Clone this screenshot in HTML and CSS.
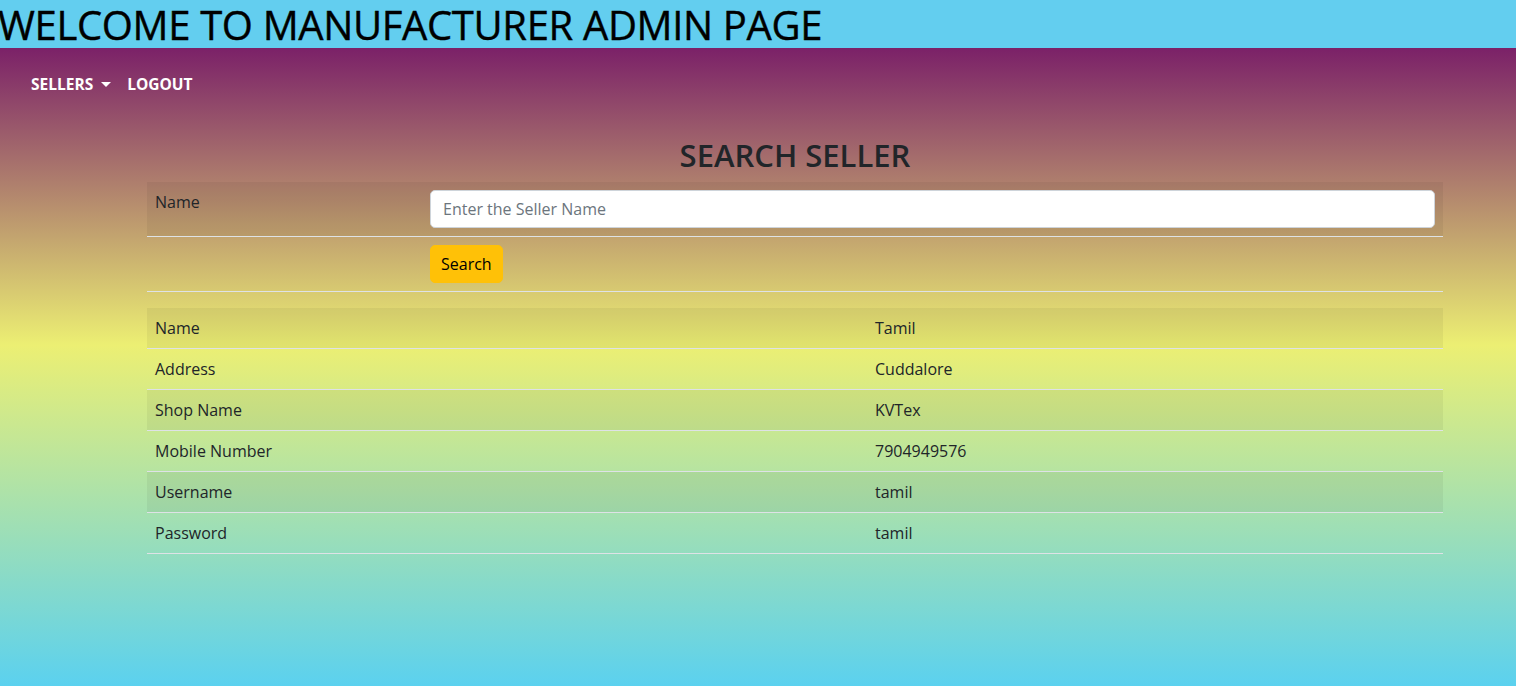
FILE: index.html
```html
<!DOCTYPE html>
<html lang="en">
<head>
<meta charset="utf-8">
<title>Manufacturer Admin</title>
<link rel="stylesheet" href="styles.css">
</head>
<body>
<header class="top-banner">
  <h1 class="banner-title">WELCOME TO MANUFACTURER ADMIN PAGE</h1>
</header>
<nav class="main-nav">
  <a class="nav-link dropdown-toggle" href="#">SELLERS</a>
  <a class="nav-link" href="#">LOGOUT</a>
</nav>
<main class="content">
  <h2 class="page-title">SEARCH SELLER</h2>
  <table class="tbl form-table">
    <tbody>
      <tr class="striped">
        <td class="label-cell">Name</td>
        <td><input class="text-input" type="text" placeholder="Enter the Seller Name"></td>
      </tr>
      <tr>
        <td class="label-cell"></td>
        <td><button class="btn-search" type="button">Search</button></td>
      </tr>
    </tbody>
  </table>
  <table class="tbl data-table">
    <tbody>
      <tr class="striped"><td class="key-cell">Name</td><td>Tamil</td></tr>
      <tr><td class="key-cell">Address</td><td>Cuddalore</td></tr>
      <tr class="striped"><td class="key-cell">Shop Name</td><td>KVTex</td></tr>
      <tr><td class="key-cell">Mobile Number</td><td>7904949576</td></tr>
      <tr class="striped"><td class="key-cell">Username</td><td>tamil</td></tr>
      <tr><td class="key-cell">Password</td><td>tamil</td></tr>
    </tbody>
  </table>
</main>
</body>
</html>
```

FILE: styles.css
```css
* { box-sizing: border-box; }

html, body { margin: 0; padding: 0; }

body {
  min-height: 100vh;
  font-family: "Open Sans", "Noto Sans", "Liberation Sans", sans-serif;
  font-size: 16px;
  line-height: 24px;
  color: #212529;
  background: linear-gradient(180deg,
    #7b2168 48px,
    #ecef73 345px,
    #5bd1ef 686px);
}

.top-banner {
  height: 48px;
  background: #63ceef;
}

.banner-title {
  margin: 0 0 0 -2px;
  font-size: 40px;
  line-height: 50px;
  height: 48px;
  font-weight: 400;
  color: #000;
  -webkit-text-stroke: 0.4px #000;
  letter-spacing: -0.35px;
  white-space: nowrap;
}

.main-nav {
  height: 72px;
  display: flex;
  align-items: center;
  padding-left: 23px;
}

.nav-link {
  color: #fff;
  text-decoration: none;
  font-weight: 700;
  font-size: 15.5px;
  padding: 8px;
}

.dropdown-toggle::after {
  content: "";
  display: inline-block;
  margin-left: 8px;
  vertical-align: 3px;
  border-top: 5px solid #fff;
  border-left: 5px solid transparent;
  border-right: 5px solid transparent;
}

.content {
  margin-left: 147px;
  width: 1296px;
  padding-top: 16px;
}

.page-title {
  margin: 0 0 8px;
  text-align: center;
  font-size: 31px;
  line-height: 38px;
  font-weight: 600;
  color: #212529;
}

.tbl {
  width: 100%;
  border-collapse: collapse;
  margin-bottom: 16px;
}

.tbl td {
  padding: 8px;
  border-bottom: 1px solid #dee2e6;
  vertical-align: top;
}

.tbl tr.striped td {
  background: rgba(0, 0, 0, 0.05);
}

.label-cell { width: 275px; }

.key-cell { width: 720px; }

.text-input {
  display: block;
  width: 100%;
  height: 38px;
  padding: 6px 12px;
  font-family: inherit;
  font-size: 16px;
  color: #212529;
  background: #fff;
  border: 1px solid #ced4da;
  border-radius: 5px;
}

.text-input::placeholder { color: #6c757d; }

.btn-search {
  display: block;
  height: 38px;
  padding: 6px 10px;
  font-family: inherit;
  font-size: 16px;
  color: #000;
  background: #ffc107;
  border: 1px solid #ffc107;
  border-radius: 5px;
}
```
